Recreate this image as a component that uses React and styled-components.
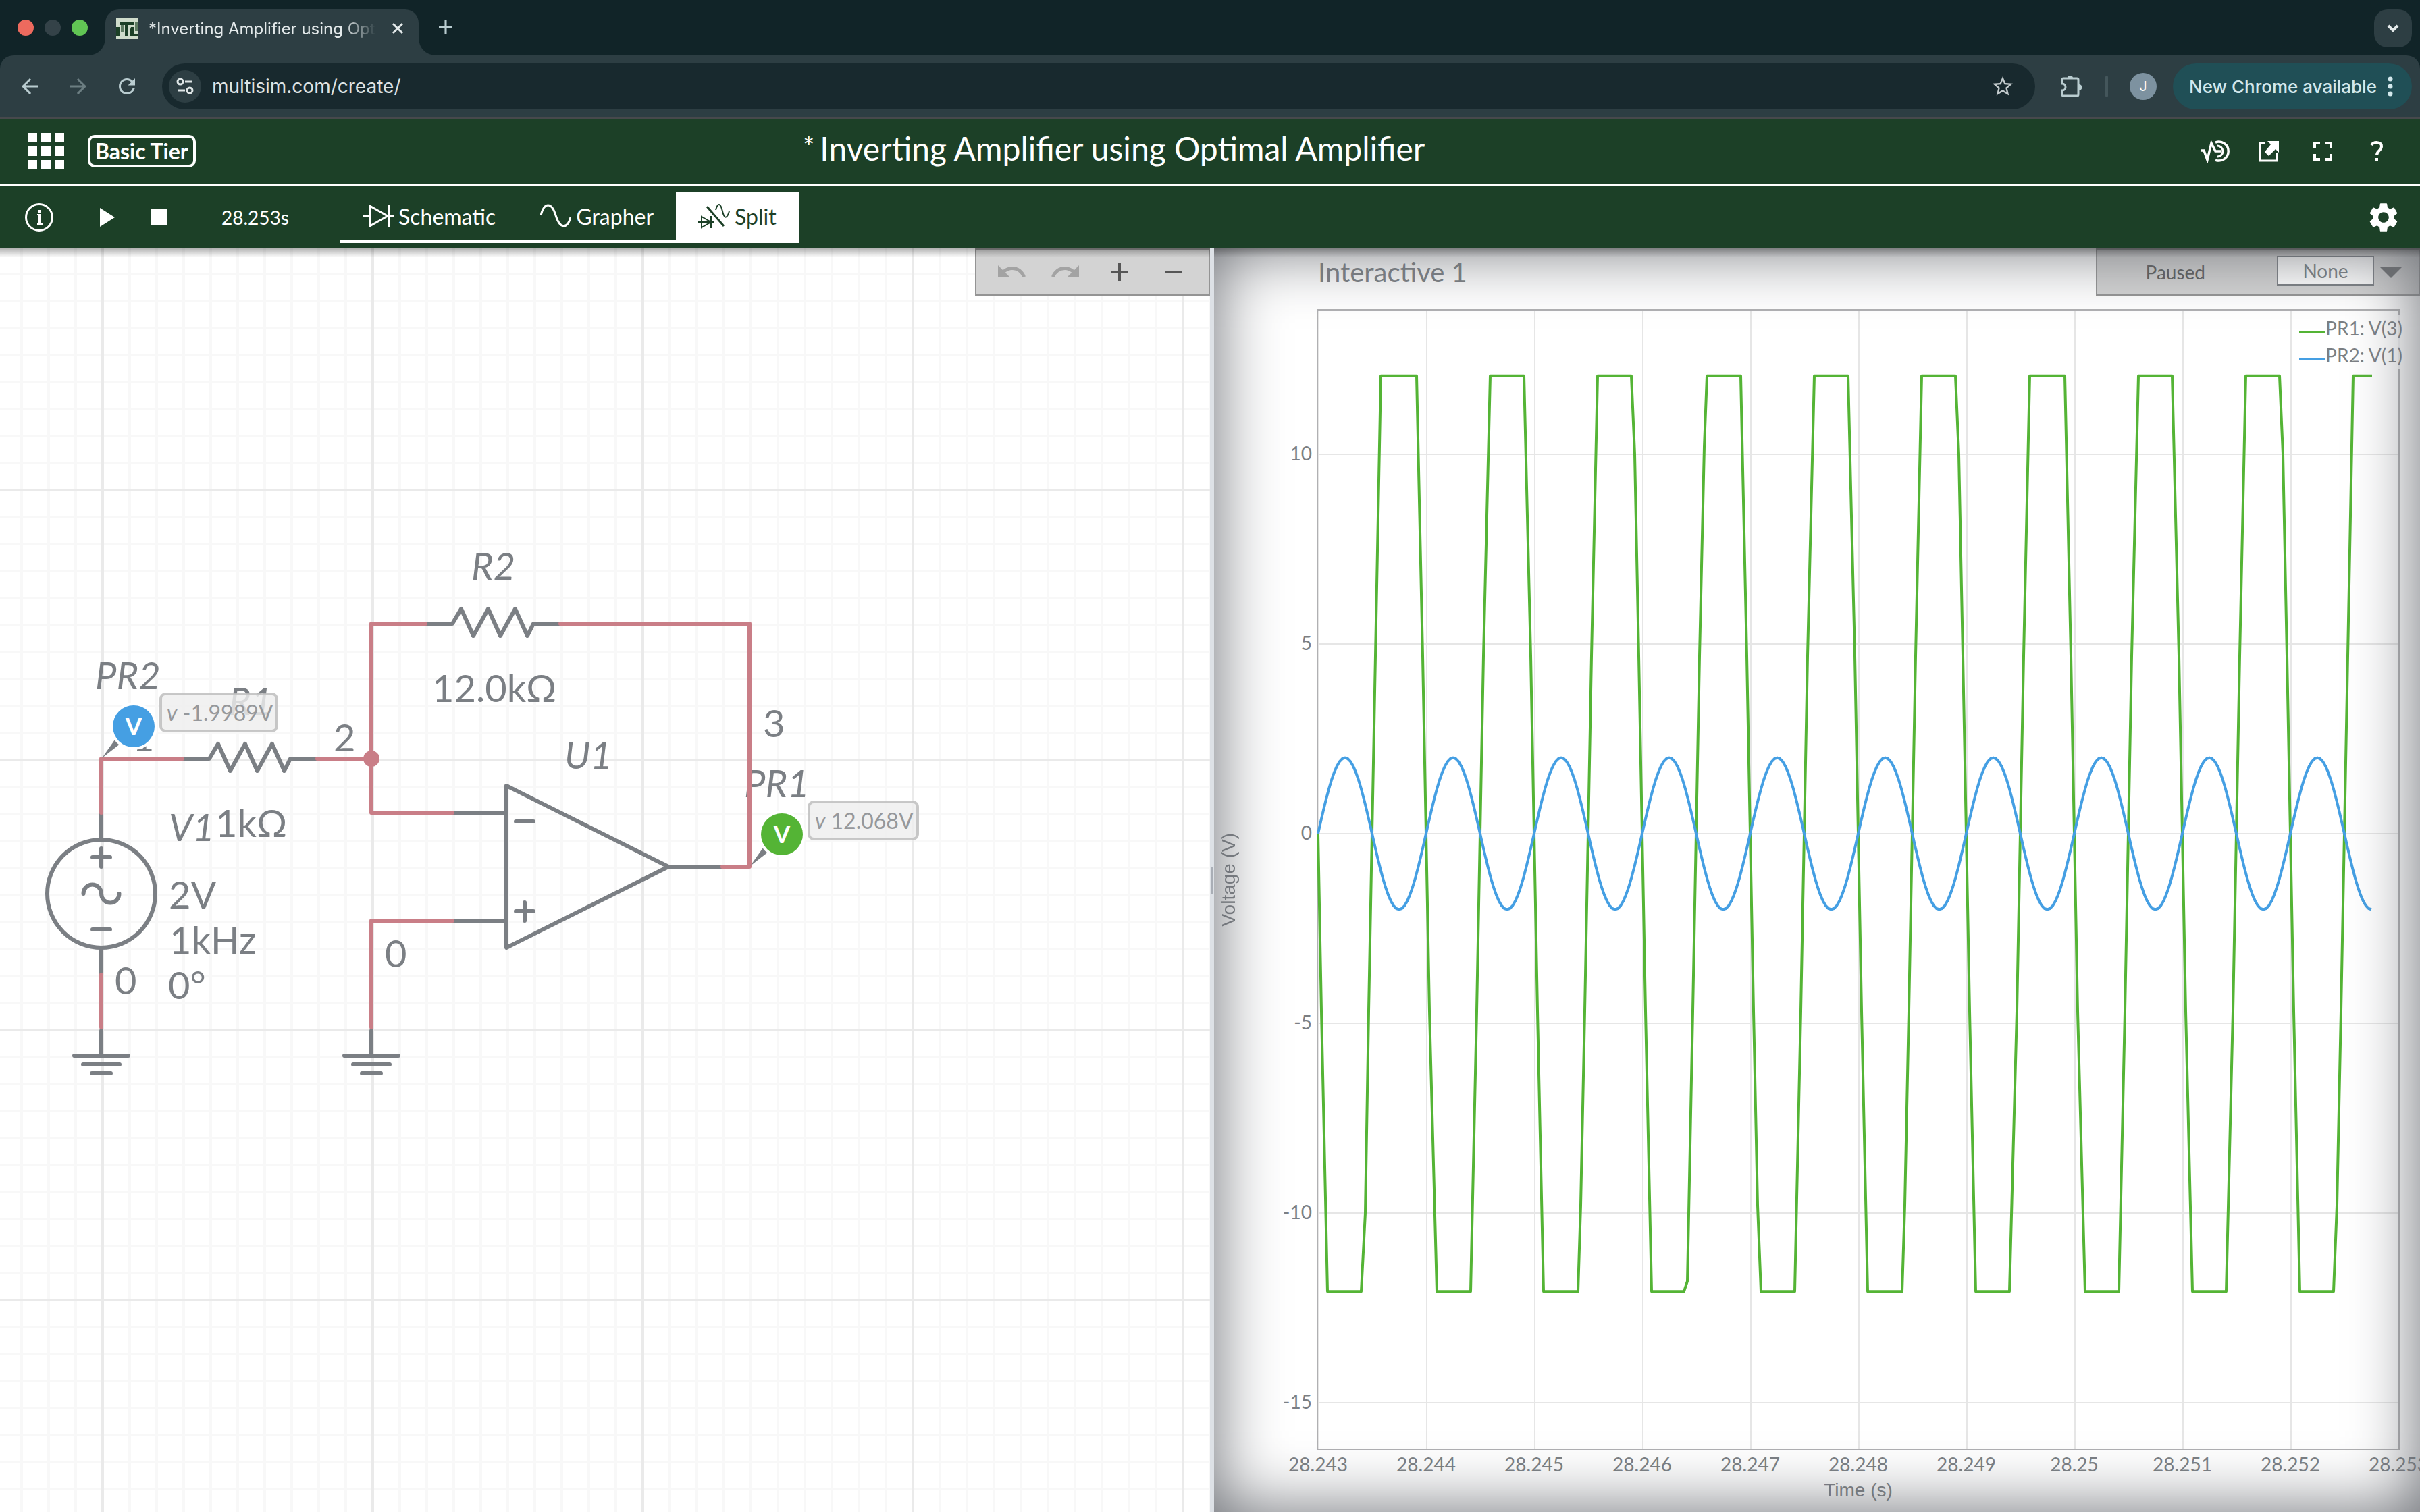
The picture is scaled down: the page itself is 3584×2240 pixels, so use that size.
import React from "react";
import styled, { createGlobalStyle } from "styled-components";
import {
  MdArrowBack,
  MdArrowForward,
  MdRefresh,
  MdStarBorder,
  MdUndo,
  MdRedo,
  MdSettings,
  MdFullscreen,
} from "react-icons/md";

const color = {
  strip: "#112428",
  chrome: "#2d3e43",
  field: "#18292e",
  brand: "#1c4027",
  part: "#7b7f84",
  wire: "#c97e87",
  green: "#54b435",
  blue: "#459fe3",
};

const Global = createGlobalStyle`
  *, *::before, *::after { box-sizing: border-box; }
  body { margin: 0; font-family: Lato, "Open Sans", sans-serif; }
  button, input, select { font: inherit; color: inherit; }
  button { border: 0; padding: 0; background: none; display: flex; align-items: center; justify-content: center; }
  svg { display: block; flex: none; }
`;

const Page = styled.div`
  height: 100vh;
  display: flex;
  flex-direction: column;
  overflow: hidden;
`;

/* ---------- browser window ---------- */

const TabStrip = styled.div`
  display: flex;
  height: 82px;
  padding: 14px 12px 0 26px;
  background: ${color.strip};
`;

const Lights = styled.div`
  display: flex;
  gap: 16px;
  width: 130px;
  padding-top: 15px;
`;

const Light = styled.span`
  width: 24px;
  height: 24px;
  border-radius: 50%;
  background: ${(p) => p.$fill};
`;

const Tab = styled.div`
  position: relative;
  display: flex;
  align-items: center;
  width: 464px;
  height: 68px;
  padding: 0 22px 12px 16px;
  border-radius: 20px 20px 0 0;
  background: ${color.chrome};
  color: #e4eaeb;
  font: 400 24px Inter, sans-serif;

  &::before,
  &::after {
    content: "";
    position: absolute;
    bottom: 0;
    width: 24px;
    height: 24px;
  }
  &::before {
    right: 100%;
    background: radial-gradient(circle at 0 0, transparent 23px, ${color.chrome} 24px);
  }
  &::after {
    left: 100%;
    background: radial-gradient(circle at 100% 0, transparent 23px, ${color.chrome} 24px);
  }
`;

const TabTitle = styled.span`
  flex: 1;
  margin: 0 16px;
  overflow: hidden;
  white-space: nowrap;
  mask-image: linear-gradient(to right, #000 84%, transparent 98%);
`;

const NewTab = styled.button`
  width: 40px;
  height: 52px;
  margin-left: 20px;
  color: #b9ccd0;
`;

const TabSearch = styled.button`
  width: 56px;
  height: 56px;
  margin-left: auto;
  border-radius: 20px;
  background: ${color.chrome};
  color: #e4eaeb;
`;

const AddressWrap = styled.div`
  background: ${color.strip};
`;

const AddressBar = styled.div`
  display: flex;
  align-items: center;
  height: 94px;
  padding: 0 12px 0 26px;
  border-radius: 20px 20px 0 0;
  border-bottom: 2px solid #47494c;
  background: ${color.chrome};
  color: #b9ccd0;
`;

const NavButton = styled.button`
  width: 36px;
  height: 36px;
  margin-right: 36px;
  opacity: ${(p) => (p.$off ? 0.45 : 1)};
`;

const Omnibox = styled.div`
  flex: 1;
  display: flex;
  align-items: center;
  height: 68px;
  margin: 0 38px 0 -2px;
  padding: 0 30px 0 10px;
  border-radius: 34px;
  background: ${color.field};
`;

const SiteInfo = styled.button`
  width: 48px;
  height: 48px;
  border-radius: 50%;
  background: ${color.chrome};
  color: #dfe6e7;
`;

const Url = styled.input`
  flex: 1;
  min-width: 0;
  margin-left: 16px;
  padding: 0;
  border: 0;
  background: none;
  color: #dde2e3;
  font: 400 28px Inter, sans-serif;
`;

const ChromeDivider = styled.span`
  width: 4px;
  height: 32px;
  margin: 0 32px 0 34px;
  border-radius: 2px;
  background: #44565b;
`;

const Avatar = styled.button`
  width: 40px;
  height: 40px;
  margin-right: 24px;
  border-radius: 50%;
  background: #7d92a0;
  color: #fff;
  font: 400 20px Inter, sans-serif;
`;

const UpdateChip = styled.button`
  width: 354px;
  height: 68px;
  padding-left: 24px;
  justify-content: flex-start;
  gap: 16px;
  border-radius: 34px;
  background: #204f56;
  color: #d3e8ec;
  font: 500 26px Inter, sans-serif;
  white-space: nowrap;
`;

/* ---------- application bars ---------- */

const Header = styled.header`
  display: flex;
  align-items: center;
  height: 100px;
  padding: 0 24px 0 40px;
  border-bottom: 4px solid #fff;
  background: ${color.brand};
  color: #fff;
`;

const Tier = styled.button`
  height: 48px;
  margin-left: 34px;
  padding: 0 7px;
  border: 4px solid #fff;
  border-radius: 10px;
  font-weight: 700;
  font-size: 32px;
  line-height: 40px;
`;

const Title = styled.h1`
  flex: 1;
  display: flex;
  justify-content: center;
  gap: 8px;
  margin: 0;
  padding: 0 230px 8px 0;
  font-weight: 400;
  font-size: 48px;
  line-height: 60px;
  white-space: nowrap;
`;

const Star = styled.span`
  font-size: 40px;
  line-height: 56px;
`;

const HeaderTools = styled.nav`
  display: flex;
  align-items: center;
`;

const HeaderTool = styled.button`
  width: 80px;
  height: 48px;
  font-size: 42px;
`;

const Bar = styled.div`
  display: flex;
  align-items: center;
  height: 92px;
  padding: 0 28px 0 36px;
  background: ${color.brand};
  color: #fff;
`;

const BarButton = styled.button`
  height: 56px;
  margin-right: ${(p) => p.$gap}px;
`;

const Clock = styled.output`
  width: 176px;
  font-size: 28px;
`;

const Modes = styled.div`
  display: flex;
  height: 76px;
  color: #fff;
`;

const Mode = styled.button`
  gap: 7px;
  height: 76px;
  padding: 0 33px;
  border-bottom: 4px solid #fff;
  background: ${(p) => (p.$on ? "#fff" : "transparent")};
  color: ${(p) => (p.$on ? color.brand : "#fff")};
  font-size: 32px;
`;

const Gear = styled.button`
  margin-left: auto;
`;

/* ---------- work area ---------- */

const Work = styled.main`
  position: relative;
  flex: 1;
  min-height: 0;
  display: grid;
  grid-template-columns: 50% 6px 1fr;

  &::after {
    content: "";
    position: absolute;
    inset: 0 0 auto 0;
    height: 12px;
    background: linear-gradient(rgba(0, 0, 0, 0.3), rgba(0, 0, 0, 0.03));
    pointer-events: none;
  }
`;

const Canvas = styled.section`
  position: relative;
  min-width: 0;
  overflow: hidden;
  background-color: #fff;
  background-image: linear-gradient(90deg, #eaeaea 4px, transparent 4px),
    linear-gradient(#eaeaea 4px, transparent 4px),
    linear-gradient(90deg, #f8f8f8 4px, transparent 4px),
    linear-gradient(#f8f8f8 4px, transparent 4px);
  background-size: 400px 400px, 400px 400px, 40px 40px, 40px 40px;
  background-position: 150px 0, 0 356px, 30px 0, 0 36px;
`;

const EditTools = styled.div`
  position: absolute;
  top: 0;
  right: 0;
  display: flex;
  align-items: center;
  height: 70px;
  padding: 0 12px;
  border: 2px solid #949494;
  background: #d3d3d3;
  color: #565656;
`;

const EditTool = styled.button`
  width: 80px;
  height: 66px;
  opacity: ${(p) => (p.$off ? 0.38 : 1)};
`;

const Splitter = styled.div`
  position: relative;
  z-index: 1;
  display: flex;
  align-items: center;
  justify-content: center;
  background: #dde1e6;

  &::after {
    content: "";
    width: 2px;
    height: 40px;
    background: #a9aeb6;
  }
`;

const Grapher = styled.section`
  position: relative;
  display: grid;
  grid-template: 90px 1fr 92px / 152px 1fr 30px;
  min-width: 0;
  min-height: 0;
  overflow: hidden;
  background: #fff;
  color: ${color.part};

  &::after {
    content: "";
    position: absolute;
    inset: 0;
    box-shadow: inset 0 0 100px #676a70;
    pointer-events: none;
  }
`;

const GraphTitle = styled.h2`
  grid-area: 1 / 2;
  margin: 0;
  padding: 0 2px;
  font-weight: 400;
  font-size: 40px;
  line-height: 70px;
`;

const AxisName = styled.div`
  grid-area: ${(p) => p.$area};
  font: 400 28px "Liberation Sans", Arial, sans-serif;
  ${(p) =>
    p.$vertical
      ? `writing-mode: vertical-rl; transform: rotate(180deg); justify-self: start;
         align-self: center; margin-left: 6px; line-height: 32px;`
      : `justify-self: center; align-self: end; line-height: 32px; padding-bottom: 16px;`}
`;

const Plot = styled.svg`
  grid-area: 2 / 2;
  width: 100%;
  height: 100%;
  overflow: visible;
`;

const Legend = styled.ul`
  grid-area: 2 / 2;
  justify-self: end;
  align-self: start;
  margin: 8px -4px 0 0;
  padding: 0;
  list-style: none;
  background: rgba(255, 255, 255, 0.85);
  font-size: 28px;
  line-height: 40px;
`;

const LegendItem = styled.li`
  display: flex;
  align-items: center;
  gap: 1px;

  &::before {
    content: "";
    width: 38px;
    height: 4px;
    margin-top: 12px;
    background: ${(p) => p.$line};
  }
`;

const GraphTools = styled.div`
  position: absolute;
  top: 0;
  right: 0;
  display: flex;
  align-items: center;
  height: 70px;
  padding: 0 24px 0 72px;
  border: 2px solid #949494;
  background: #d3d3d3;
  color: #5c5c5c;
  font-size: 28px;
`;

const CursorSelect = styled.select`
  appearance: none;
  width: 144px;
  height: 44px;
  margin: 0 8px 4px 106px;
  padding: 0;
  border: 2px solid ${color.part};
  border-radius: 0;
  background: #fff;
  color: ${color.part};
  text-align: center;
  text-align-last: center;
`;

/* ---------- icons ---------- */

const Favicon = () => (
  <svg width="32" height="32" viewBox="0 0 32 32">
    <path fill="#cfdccb" d="M0 0h32v32H0z" />
    <path fill={color.brand} d="M6 6h20v5H18v16h-5V11H6zM0 14h6v13H0zM22 14h4v10h6v4H20v-8z" />
    <path fill="#5f7d63" d="M7 11h4v10H7zM28 6h4v14h-4z" />
  </svg>
);

const Cross = () => (
  <svg width="18" height="18" viewBox="0 0 18 18" stroke="currentColor" strokeWidth="3">
    <path d="M2 2l14 14M16 2L2 16" />
  </svg>
);

const Plus = ({ size, weight }) => (
  <svg width={size} height={size} viewBox="0 0 26 26" stroke="currentColor" strokeWidth={weight}>
    <path d="M13 0v26M0 13h26" />
  </svg>
);

const Minus = () => (
  <svg width="26" height="26" viewBox="0 0 26 26" stroke="currentColor" strokeWidth="4">
    <path d="M0 13h26" />
  </svg>
);

const Chevron = () => (
  <svg width="18" height="12" viewBox="0 0 18 12" fill="none" stroke="currentColor" strokeWidth="4">
    <path d="M2 2l7 7 7-7" />
  </svg>
);

const Tune = () => (
  <svg width="26" height="26" viewBox="0 0 26 26" fill="none" stroke="currentColor" strokeWidth="3">
    <circle cx="6" cy="6" r="4" />
    <path d="M13 6h11M2 19h11" />
    <circle cx="20" cy="19" r="4" />
  </svg>
);

const Puzzle = () => (
  <svg width="32" height="34" viewBox="0 0 32 34">
    <path
      d="M2 7q0-2 2-2h20q2 0 2 2v22q0 2-2 2H4q-2 0-2-2v-6c3 0 5-2 5-5s-2-5-5-5z"
      fill="none"
      stroke="currentColor"
      strokeWidth="3"
    />
    <path d="M10 5a4 4 0 0 1 8 0zM27 14a4 4 0 0 1 0 9z" fill="currentColor" />
  </svg>
);

const Dots = () => (
  <svg width="8" height="30" viewBox="0 0 8 30" fill="currentColor">
    <circle cx="4" cy="4" r="3.5" />
    <circle cx="4" cy="15" r="3.5" />
    <circle cx="4" cy="26" r="3.5" />
  </svg>
);

const AppGrid = () => (
  <svg width="56" height="56" viewBox="0 0 56 56" fill="#fff">
    {[1, 21, 41].map((y) =>
      [1, 21, 41].map((x) => <rect key={`${x}-${y}`} x={x} y={y} width="14" height="14" />)
    )}
  </svg>
);

const Signal = () => (
  <svg width="50" height="36" viewBox="-4 0 50 36" fill="none" stroke="#fff">
    <path d="M0 17h5l5 14L16 6l6 12h9" strokeWidth="3.5" />
    <path d="M25 10a8 8 0 1 1 0 16" strokeWidth="3" />
    <path d="M22 5a14 14 0 1 1 0 26" strokeWidth="3.5" />
  </svg>
);

const Popout = () => (
  <svg width="32" height="32" viewBox="0 0 32 32">
    <path d="M11 4H3v26h25V18" fill="none" stroke="#fff" strokeWidth="3" />
    <path d="M14 1h17v17l-5-5-10 10-6-6L19 6z" fill="#fff" />
  </svg>
);

const Help = () => (
  <svg width="20" height="30" viewBox="0 0 20 30" fill="none" stroke="#fff" strokeWidth="4">
    <path d="M2 6c3-5 15-6 15 2 0 6-7 6-7 13" />
    <path d="M10 25v4" />
  </svg>
);

const Info = () => (
  <svg width="44" height="44" viewBox="0 0 44 44">
    <circle cx="22" cy="22" r="19.5" fill="none" stroke="#fff" strokeWidth="3" />
    <path d="M20 11h5v4h-5zM19 17h6v14h2v2h-8v-2h2V19h-2z" fill="#fff" />
  </svg>
);

const Diode = () => (
  <svg width="46" height="38" viewBox="0 -2 46 38" fill="none" stroke="currentColor" strokeWidth="3">
    <path d="M0 17h12M38 17h8M11.5 2.5v29L37 17zM39.5 0v34" />
  </svg>
);

const Sine = () => (
  <svg width="46" height="38" viewBox="0 -2 46 38" fill="none" stroke="currentColor" strokeWidth="3">
    <path d="M1 16C6-4 17-4 23 16s17 21 22 3" />
  </svg>
);

const SplitIcon = () => (
  <svg width="47" height="38" viewBox="0 -1 47 38" fill="none" stroke="currentColor" strokeWidth="2">
    <path d="M13 4l25 29" strokeWidth="3" />
    <path d="M0 27h24M5 19v16l14-8zM19 18v18" />
    <path d="M26 9c3-11 7-11 10 2s7 10 10 0" />
  </svg>
);

/* ---------- schematic drawing ---------- */

const Drawing = styled.svg`
  font-family: Lato, sans-serif;
  font-size: 56px;
  fill: none;
  stroke-width: 6px;
  stroke-linecap: round;
  stroke-linejoin: round;
`;

const Part = styled.path`
  stroke: ${color.part};
`;

const Wire = styled.path`
  stroke: ${color.wire};
`;

const Label = styled.text`
  fill: ${color.part};
  font-style: ${(p) => (p.$name ? "italic" : "normal")};
`;

const Reading = styled.text`
  fill: #96989b;
  font-size: 32px;
`;

const Letter = styled.text`
  fill: #fff;
  font-size: 36px;
  font-weight: 700;
  text-anchor: middle;
`;

const names = [
  ["PR2", 141, 1021],
  ["R1", 339, 1059],
  ["R2", 698, 859],
  ["U1", 836, 1139],
  ["PR1", 1102, 1181],
  ["V1", 250, 1246],
];

const values = [
  ["1", 196, 1113],
  ["2", 494, 1113],
  ["1kΩ", 319, 1240],
  ["12.0kΩ", 640, 1040],
  ["3", 1130, 1092],
  ["2V", 250, 1346],
  ["1kHz", 251, 1413],
  ["0°", 249, 1480],
  ["0", 170, 1473],
  ["0", 570, 1433],
];

const Resistor = ({ x, y }) => (
  <Part
    d={`M${x} ${y}h40l13-22 18 40 22-40 18 40 22-40 18 40 9-18h40`}
  />
);

const Ground = ({ x }) => (
  <Part d={`M${x} 1527V1564M${x - 40} 1564h80M${x - 27} 1577h54M${x - 14} 1590h28`} />
);

const Probe = ({ x, y, fill, value, width }) => (
  <g transform={`translate(${x} ${y})`}>
    <path d="M1 -1L20 -28l8 6z" fill={color.part} />
    <circle cx="48" cy="-48" r="35" fill="#fff" />
    <circle cx="48" cy="-48" r="31" fill={fill} />
    <Letter x="48" y="-35">
      V
    </Letter>
    <rect
      x="88"
      y="-96"
      width={width}
      height="55"
      rx="7"
      fill="rgba(238,238,238,0.82)"
      stroke="rgba(190,190,190,0.85)"
      strokeWidth="4"
    />
    <Reading x="97" y="-56">
      <tspan fontStyle="italic">v</tspan> {value}
    </Reading>
  </g>
);

const Schematic = () => (
  <Drawing width="1400" height="1400" viewBox="0 368 1400 1400">
    {names.map(([t, x, y]) => (
      <Label key={t} $name x={x} y={y}>
        {t}
      </Label>
    ))}
    {values.map(([t, x, y]) => (
      <Label key={t + x} x={x} y={y}>
        {t}
      </Label>
    ))}
    <Resistor x={270} y={1124} />
    <Resistor x={630} y={924} />
    <Part d="M150 1204V1244M150 1404V1444" />
    <circle cx="150" cy="1324" r="80" stroke={color.part} />
    <Part d="M137 1270h26M150 1257v27M137 1377h26" />
    <Part d="M123.5 1324a13.25 13.5 0 0 1 26.5 0a13.25 13.5 0 0 0 26.5 0" />
    <Part d="M750 1164L990 1284 750 1404zM670 1204h80M670 1364h80M990 1284h80" />
    <Part d="M764 1217h26M764 1350h26M777 1337v27" />
    <Ground x={150} />
    <Ground x={550} />
    <Wire d="M270 1124H150V1204M150 1444V1522M470 1124H550M630 924H550V1204H670" />
    <Wire d="M830 924H1110V1284H1070M670 1364H550V1522" />
    <circle cx="550" cy="1124" r="12" fill={color.wire} />
    <Probe x={150} y={1124} fill={color.blue} value="-1.9989V" width={172} />
    <Probe x={1110} y={1284} fill={color.green} value="12.068V" width={161} />
  </Drawing>
);

/* ---------- plot ---------- */

const PERIOD = 160;
const ORIGIN = 3;
const ZERO = 777;
const VOLT = 56.2;
const LIMIT = 12.068;

// Each cycle lists [pixel offset, volts] where the output bends near its limits:
// the low stretch first, then the high one.
const low = (a, b, ...bend) => [[a, -LIMIT], [b, -LIMIT], ...bend];
const high = (a, b, ...bend) => [[a, LIMIT], [b, LIMIT], ...bend];

const cycles = [
  { low: low(13, 63, [69, -10]), high: high(92, 145) },
  { low: low(15, 65), high: high(94, 144) },
  { low: low(13, 64, [68, -9.8]), high: high(93, 143, [148, 10]) },
  { low: low(13, 61, [66, -11.8]), high: [[91, 10.2], ...high(95, 145)] },
  { low: [[10, -9.8], ...low(15, 65)], high: high(94, 144) },
  { low: low(13, 64, [68, -9.8]), high: high(93, 143, [148, 10]) },
  { low: low(13, 63), high: high(93, 145) },
  { low: low(15, 65), high: high(94, 144) },
  { low: low(14, 64), high: high(93, 143, [148, 10]) },
  { low: low(13, 63, [68, -9.8]), high: high(92, 120) },
];

const wave = (dx) => Math.sin((dx / PERIOD) * 2 * Math.PI);
const yOf = (v) => ZERO - v * VOLT;

const outputPath = () => {
  const pts = [];
  cycles.forEach((cycle, i) => {
    const start = ORIGIN + i * PERIOD;
    const put = ([dx, v]) => pts.push(`${start + dx} ${yOf(v).toFixed(1)}`);
    const free = (dx) => [dx - 1, -24 * wave(dx)];
    [0, 5].map(free).forEach(put);
    cycle.low.forEach(put);
    [75, 80, 85].map(free).forEach(put);
    cycle.high.forEach(put);
    if (i < cycles.length - 1) put(free(155));
  });
  return `M${pts.join("L")}`;
};

const inputPath = () => {
  const pts = [];
  for (let x = 0; x <= 1560; x += 4)
    pts.push(`${ORIGIN - 1 + x} ${yOf(2 * wave(x)).toFixed(1)}`);
  return `M${pts.join("L")}`;
};

const times = [
  "28.243", "28.244", "28.245", "28.246", "28.247", "28.248",
  "28.249", "28.25", "28.251", "28.252", "28.253",
];
const volts = [10, 5, 0, -5, -10, -15];

const Tick = styled.text`
  fill: ${color.part};
  font-family: Lato, sans-serif;
  font-size: 28px;
  text-anchor: ${(p) => p.$anchor};
`;

const Chart = () => (
  <Plot viewBox="0 0 1604 1690" preserveAspectRatio="xMinYMin meet" fill="none">
    {times.map((t, i) => (
      <g key={t}>
        <path d={`M${ORIGIN + i * PERIOD} 2V1688`} stroke="#e6e6e6" strokeWidth="2" />
        <Tick $anchor="middle" x={2 + i * PERIOD} y="1722">
          {t}
        </Tick>
      </g>
    ))}
    {volts.map((v) => (
      <g key={v}>
        <path d={`M2 ${Math.round(yOf(v))}H1602`} stroke="#e6e6e6" strokeWidth="2" />
        <Tick $anchor="end" x="-7" y={Math.round(yOf(v)) + 9}>
          {v}
        </Tick>
      </g>
    ))}
    <rect x="1" y="1" width="1602" height="1688" stroke="#b0b0b2" strokeWidth="2" />
    <path d={outputPath()} stroke={color.green} strokeWidth="4" strokeLinejoin="round" />
    <path d={inputPath()} stroke={color.blue} strokeWidth="4" strokeLinejoin="round" />
  </Plot>
);

/* ---------- page ---------- */

export default function App() {
  return (
    <Page>
      <Global />
      <TabStrip>
        <Lights>
          <Light $fill="#ed6a5e" />
          <Light $fill="#344248" />
          <Light $fill="#61c554" />
        </Lights>
        <Tab>
          <Favicon />
          <TabTitle>*Inverting Amplifier using Opt</TabTitle>
          <button aria-label="Close tab">
            <Cross />
          </button>
        </Tab>
        <NewTab aria-label="New tab">
          <Plus size={20} weight={4} />
        </NewTab>
        <TabSearch aria-label="Search tabs">
          <Chevron />
        </TabSearch>
      </TabStrip>
      <AddressWrap>
        <AddressBar>
          <NavButton aria-label="Back">
            <MdArrowBack size={36} />
          </NavButton>
          <NavButton aria-label="Forward" $off>
            <MdArrowForward size={36} />
          </NavButton>
          <NavButton aria-label="Reload">
            <MdRefresh size={36} />
          </NavButton>
          <Omnibox>
            <SiteInfo aria-label="Site information">
              <Tune />
            </SiteInfo>
            <Url aria-label="Address" defaultValue="multisim.com/create/" />
            <button aria-label="Bookmark">
              <MdStarBorder size={36} color="#c3cbcd" />
            </button>
          </Omnibox>
          <button aria-label="Extensions">
            <Puzzle />
          </button>
          <ChromeDivider />
          <Avatar>J</Avatar>
          <UpdateChip>
            New Chrome available
            <Dots />
          </UpdateChip>
        </AddressBar>
      </AddressWrap>

      <Header>
        <button aria-label="Applications">
          <AppGrid />
        </button>
        <Tier>Basic Tier</Tier>
        <Title>
          <Star>*</Star>
          Inverting Amplifier using Optimal Amplifier
        </Title>
        <HeaderTools>
          <HeaderTool aria-label="Signals">
            <Signal />
          </HeaderTool>
          <HeaderTool aria-label="Share">
            <Popout />
          </HeaderTool>
          <HeaderTool aria-label="Full screen">
            <MdFullscreen size={48} />
          </HeaderTool>
          <HeaderTool aria-label="Help">
            <Help />
          </HeaderTool>
        </HeaderTools>
      </Header>

      <Bar>
        <BarButton $gap={68} aria-label="Information">
          <Info />
        </BarButton>
        <BarButton $gap={54} aria-label="Run">
          <svg width="22" height="28" viewBox="0 0 22 28" fill="#fff">
            <path d="M0 0l22 14L0 28z" />
          </svg>
        </BarButton>
        <BarButton $gap={80} aria-label="Stop">
          <svg width="24" height="24" viewBox="0 0 24 24" fill="#fff">
            <path d="M0 0h24v24H0z" />
          </svg>
        </BarButton>
        <Clock>28.253s</Clock>
        <Modes>
          <Mode>
            <Diode />
            Schematic
          </Mode>
          <Mode>
            <Sine />
            Grapher
          </Mode>
          <Mode $on>
            <SplitIcon />
            Split
          </Mode>
        </Modes>
        <Gear aria-label="Settings">
          <MdSettings size={52} />
        </Gear>
      </Bar>

      <Work>
        <Canvas>
          <Schematic />
          <EditTools>
            <EditTool $off aria-label="Undo">
              <MdUndo size={48} />
            </EditTool>
            <EditTool $off aria-label="Redo">
              <MdRedo size={48} />
            </EditTool>
            <EditTool aria-label="Zoom in">
              <Plus size={26} weight={4} />
            </EditTool>
            <EditTool aria-label="Zoom out">
              <Minus />
            </EditTool>
          </EditTools>
        </Canvas>
        <Splitter />
        <Grapher>
          <GraphTitle>Interactive 1</GraphTitle>
          <AxisName $area="2 / 1" $vertical>
            Voltage (V)
          </AxisName>
          <Chart />
          <Legend>
            <LegendItem $line={color.green}>PR1: V(3)</LegendItem>
            <LegendItem $line={color.blue}>PR2: V(1)</LegendItem>
          </Legend>
          <AxisName $area="3 / 2">Time (s)</AxisName>
          <GraphTools>
            Paused
            <CursorSelect aria-label="Cursor" defaultValue="None">
              <option>None</option>
            </CursorSelect>
            <svg width="34" height="17" viewBox="0 0 34 17" fill="#6c6e70">
              <path d="M0 0h34L17 17z" />
            </svg>
          </GraphTools>
        </Grapher>
      </Work>
    </Page>
  );
}
